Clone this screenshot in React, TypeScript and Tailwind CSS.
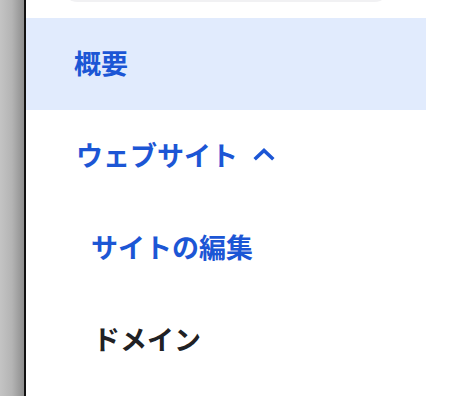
export default function App() {
  return (
    <div
      className="flex h-[396px] w-[468px] overflow-hidden bg-white"
      style={{ fontFamily: '"Noto Sans", "Noto Sans CJK JP", sans-serif' }}
    >
      {/* window edge on the left */}
      <div className="h-full w-[24px] shrink-0 bg-gradient-to-r from-[#c4c4c4] via-[#b4b4b4] to-[#8e8e8e]" />
      <div className="h-full w-[2px] shrink-0 bg-[#111]" />

      <div className="flex w-[400px] flex-col">
        {/* bottom of search field */}
        <div className="-mt-[40px] ml-[34px] h-[42px] w-[332px] rounded-[18px] bg-[#f1f1f3]" />

        <nav className="mt-[16px] flex flex-col text-[27px] font-bold">
          <a className="flex h-[92px] items-center bg-[#e1ebfd] pl-[48px] text-[#1c56d5]">概要</a>
          <a className="flex h-[92px] items-center gap-[15px] pl-[50px] text-[#1c56d5]">
            ウェブサイト
            <svg width="22" height="14" viewBox="0 0 22 14" className="mt-[-4px]">
              <path d="M3 11 L11 3.5 L19 11" fill="none" stroke="#1c56d5" strokeWidth="3.6" strokeLinecap="square" />
            </svg>
          </a>
          <a className="flex h-[92px] items-center pl-[65px] text-[#1c56d5]">サイトの編集</a>
          <a className="flex h-[92px] items-center pl-[67px] text-[#202124]">ドメイン</a>
        </nav>
      </div>
    </div>
  );
}
